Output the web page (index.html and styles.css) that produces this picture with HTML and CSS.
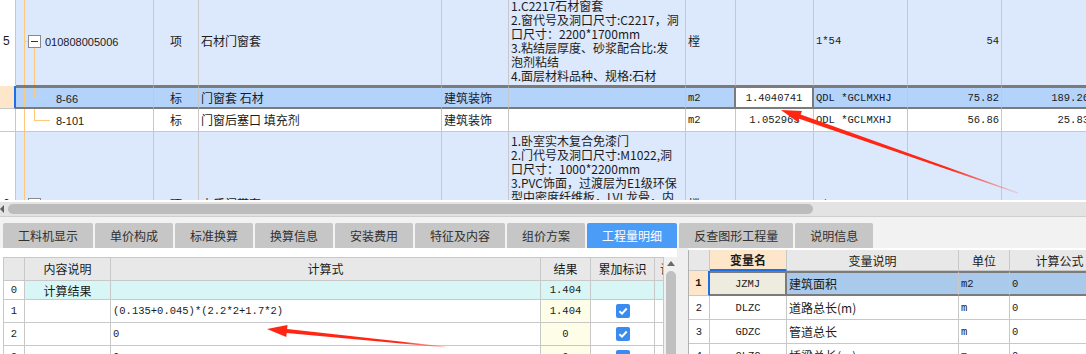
FILE: index.html
```html
<!DOCTYPE html>
<html lang="zh-CN">
<head>
  <meta charset="UTF-8">
  <title>工程量明细</title>
  <link rel="stylesheet" href="styles.css">
</head>
<body>

<div class="sheet">
  <table class="grid main">
    <colgroup>
      <col class="c-num"><col class="c-tree"><col class="c-type"><col class="c-name"><col class="c-spec">
      <col class="c-desc"><col class="c-unit"><col class="c-qty"><col class="c-expr"><col class="c-price"><col class="c-total">
    </colgroup>
    <tr class="r-item before-sel">
      <td class="num">5</td>
      <td class="tree tree-root"><span class="toggle"></span><span class="code">010808005006</span></td>
      <td class="center">项</td>
      <td>石材门窗套</td>
      <td></td>
      <td class="desc">1.C2217石材窗套<br>2.窗代号及洞口尺寸:C2217，洞<br>口尺寸：2200*1700mm<br>3.粘结层厚度、砂浆配合比:发<br>泡剂粘结<br>4.面层材料品种、规格:石材</td>
      <td>樘</td>
      <td></td>
      <td class="mono">1*54</td>
      <td class="mono right">54</td>
      <td></td>
    </tr>
    <tr class="r-sub sel">
      <td class="num"></td>
      <td class="tree tree-leaf"><span class="code">8-66</span></td>
      <td class="center">标</td>
      <td>门窗套 石材</td>
      <td>建筑装饰</td>
      <td></td>
      <td class="mono unit">m2</td>
      <td class="mono center qty">1.4040741</td>
      <td class="mono">QDL *GCLMXHJ</td>
      <td class="mono right">75.82</td>
      <td class="mono right">189.26</td>
    </tr>
    <tr class="r-sub plain">
      <td class="num"></td>
      <td class="tree tree-leaf"><span class="code">8-101</span></td>
      <td class="center">标</td>
      <td>门窗后塞口 填充剂</td>
      <td>建筑装饰</td>
      <td></td>
      <td class="mono">m2</td>
      <td class="mono center">1.052963</td>
      <td class="mono">QDL *GCLMXHJ</td>
      <td class="mono right">56.86</td>
      <td class="mono right">25.83</td>
    </tr>
    <tr class="r-item">
      <td class="num">6</td>
      <td class="tree tree-root2"><span class="toggle"></span><span class="code">010801002001</span></td>
      <td class="center">项</td>
      <td>木质门带套</td>
      <td></td>
      <td class="desc">1.卧室实木复合免漆门<br>2.门代号及洞口尺寸:M1022,洞<br>口尺寸：1000*2200mm<br>3.PVC饰面，过渡层为E1级环保<br>型中密度纤维板，LVL龙骨，内<br>部实木门芯<br>4.五金件：含门锁、合页<br>5.门套：木质门套<br>6.其他：满足设计及规范<br>要求</td>
      <td>樘</td>
      <td></td>
      <td class="mono">1*54</td>
      <td class="mono right">149</td>
      <td></td>
    </tr>
  </table>
</div>

<div class="hscroll"><span class="arrow"></span><div class="thumb"></div></div>

<div class="tabs">
  <div class="tab">工料机显示</div>
  <div class="tab">单价构成</div>
  <div class="tab">标准换算</div>
  <div class="tab">换算信息</div>
  <div class="tab">安装费用</div>
  <div class="tab">特征及内容</div>
  <div class="tab">组价方案</div>
  <div class="tab active">工程量明细</div>
  <div class="tab">反查图形工程量</div>
  <div class="tab">说明信息</div>
</div>

<div class="bottom">
  <div class="calc">
    <table class="grid calc-table">
      <colgroup>
        <col class="k-num"><col class="k-name"><col class="k-expr"><col class="k-res"><col class="k-flag"><col class="k-more">
      </colgroup>
      <tr class="head">
        <th></th><th>内容说明</th><th>计算式</th><th>结果</th><th>累加标识</th><th class="more">计</th>
      </tr>
      <tr class="total">
        <td class="num mono">0</td><td class="center">计算结果</td><td></td><td class="mono center">1.404</td><td></td><td></td>
      </tr>
      <tr>
        <td class="num mono">1</td><td></td><td class="mono">(0.135+0.045)*(2.2*2+1.7*2)</td><td class="mono center res">1.404</td>
        <td class="center"><svg class="chk" width="14" height="14" viewBox="0 0 14 14"><rect width="14" height="14" rx="2" fill="#3a8bf0"/><path d="M3.4 7.3 L6 9.7 L10.7 4.5" fill="none" stroke="#fff" stroke-width="2"/></svg></td><td></td>
      </tr>
      <tr>
        <td class="num mono">2</td><td></td><td class="mono">0</td><td class="mono center res">0</td>
        <td class="center"><svg class="chk" width="14" height="14" viewBox="0 0 14 14"><rect width="14" height="14" rx="2" fill="#3a8bf0"/><path d="M3.4 7.3 L6 9.7 L10.7 4.5" fill="none" stroke="#fff" stroke-width="2"/></svg></td><td></td>
      </tr>
      <tr>
        <td class="num mono">3</td><td></td><td class="mono">0</td><td class="mono center res">0</td>
        <td class="center"><svg class="chk" width="14" height="14" viewBox="0 0 14 14"><rect width="14" height="14" rx="2" fill="#3a8bf0"/><path d="M3.4 7.3 L6 9.7 L10.7 4.5" fill="none" stroke="#fff" stroke-width="2"/></svg></td><td></td>
      </tr>
    </table>
    <div class="vscroll"><span class="up"></span><div class="vthumb"></div></div>
  </div>

  <div class="vars">
    <table class="grid var-table">
      <colgroup>
        <col class="v-num"><col class="v-code"><col class="v-name"><col class="v-unit"><col class="v-formula">
      </colgroup>
      <tr class="head">
        <th></th><th class="hl">变量名</th><th>变量说明</th><th>单位</th><th>计算公式</th>
      </tr>
      <tr class="sel">
        <td class="num mono">1</td><td class="mono center cur">JZMJ</td><td>建筑面积</td><td class="mono">m2</td><td class="mono">0</td>
      </tr>
      <tr>
        <td class="num mono">2</td><td class="mono center">DLZC</td><td>道路总长(m)</td><td class="mono">m</td><td class="mono">0</td>
      </tr>
      <tr>
        <td class="num mono">3</td><td class="mono center">GDZC</td><td>管道总长</td><td class="mono">m</td><td class="mono">0</td>
      </tr>
      <tr>
        <td class="num mono">4</td><td class="mono center">QLZC</td><td>桥梁总长(m)</td><td class="mono">m</td><td class="mono">0</td>
      </tr>
    </table>
  </div>
</div>

<svg class="marks" width="1086" height="354" viewBox="0 0 1086 354">
  <defs>
    <linearGradient id="fade1" gradientUnits="userSpaceOnUse" x1="781" y1="110" x2="1018" y2="193">
      <stop offset="0" stop-color="#ff2614"/>
      <stop offset="0.7" stop-color="#ff2614"/>
      <stop offset="1" stop-color="#ff2614" stop-opacity="0.15"/>
    </linearGradient>
    <linearGradient id="fade2" gradientUnits="userSpaceOnUse" x1="267" y1="329" x2="445" y2="347">
      <stop offset="0" stop-color="#ff2614"/>
      <stop offset="0.75" stop-color="#ff2614"/>
      <stop offset="1" stop-color="#ff2614" stop-opacity="0.2"/>
    </linearGradient>
  </defs>
  <polygon fill="url(#fade1)" points="781,110 802,110.9 800.6,114.5 1018.2,192.5 1017.8,193.5 799.2,118.7 797.9,122.3"/>
  <polygon fill="url(#fade2)" points="267,329 287.5,325 287.1,329 445.05,346.5 444.95,347.5 286.7,333 286.3,337"/>
</svg>

</body>
</html>
```

FILE: styles.css
```css
body {
  margin: 0;
  width: 1086px;
  height: 354px;
  overflow: hidden;
  position: relative;
  font-family: "Noto Sans CJK SC", "Liberation Sans", sans-serif;
  font-size: 12px;
  color: #1b1b1b;
  background: #fff;
}

/* shared grid look */
.grid {
  border-collapse: separate;
  border-spacing: 0;
  table-layout: fixed;
}

.grid td, .grid th {
  padding: 0 2px;
  border-right: 1px solid #c8c8c8;
  border-bottom: 1px solid #c8c8c8;
  white-space: nowrap;
  overflow: hidden;
  font-weight: normal;
  text-align: left;
}

.mono {
  font-family: "Liberation Mono", monospace;
  font-size: 10.5px;
}

.center { text-align: center !important; }
.right { text-align: right !important; }

/* top sheet */
.sheet {
  height: 200px;
  overflow: hidden;
}

.main {
  width: 1092px;
  margin-top: -3px;
}

.c-num { width: 16px; }
.c-tree { width: 138px; }
.c-type { width: 45px; }
.c-name { width: 243px; }
.c-spec { width: 67px; }
.c-desc { width: 177px; }
.c-unit { width: 50px; }
.c-qty { width: 78px; }
.c-expr { width: 94px; }
.c-price { width: 94px; }
.c-total { width: 90px; }

.main td {
  background-color: #dce8fb;
  line-height: 14px;
}

.main tr.r-item { height: 88px; }
.main tr.r-sub { height: 23px; }
.main tr.before-sel td { border-bottom-color: #7b7b7b; }
.main tr.before-sel td.num { border-bottom-color: transparent; }
.main tr.plain td { background-color: #fff; }

.main td.num {
  background-color: #fff;
  padding-left: 3px;
  font-family: "Liberation Sans", sans-serif;
}

.main .desc { padding: 2px; }

.main tr.sel td {
  background-color: #b4d3fb;
  border-top: 2px solid #7b7b7b;
  border-bottom: 2px solid #7b7b7b;
}

.main tr.sel td.num {
  background-color: #fde6c9;
  border-top: 0;
  border-bottom: 1px solid #c8c8c8;
  border-right: 2px solid #1e6fe6;
}

.main tr.sel td.unit { border-right: 2px solid #7b7b7b; }
.main tr.sel td.qty {
  background-color: #fff;
  border-right: 2px solid #7b7b7b;
}

/* tree lines */
.tree {
  background-repeat: no-repeat;
}

.tree .code {
  font-family: "Liberation Sans", sans-serif;
  font-size: 11px;
  vertical-align: middle;
}

.tree-root {
  padding-left: 12px !important;
  background-image:
    linear-gradient(#ffc97c, #ffc97c),
    linear-gradient(#ffc97c, #ffc97c),
    linear-gradient(#ffc97c, #ffc97c);
  background-size: 1px 100%, 5px 1px, 1px 37px;
  background-position: 8px 0, 8px 50%, 18px 100%;
}

.tree-root2 {
  padding-left: 12px !important;
  background-image:
    linear-gradient(#ffc97c, #ffc97c),
    linear-gradient(#ffc97c, #ffc97c);
  background-size: 1px 100%, 5px 1px;
  background-position: 8px 0, 8px 50%;
}

.tree-leaf {
  padding-left: 40px !important;
  background-image:
    linear-gradient(#ffc97c, #ffc97c),
    linear-gradient(#ffc97c, #ffc97c),
    linear-gradient(#ffc97c, #ffc97c);
  background-size: 1px 100%, 1px 50%, 16px 1px;
  background-position: 8px 0, 18px 0, 18px 50%;
}

.toggle {
  display: inline-block;
  width: 11px;
  height: 11px;
  margin-right: 4px;
  border: 1px solid #8a8a8a;
  background: #fff linear-gradient(#333, #333) center / 7px 1px no-repeat;
  vertical-align: middle;
}

/* horizontal scroll bar */
.hscroll {
  display: flex;
  align-items: center;
  height: 14px;
  border-top: 2px solid #fff;
  background: #e3e3e3;
}

.hscroll .arrow {
  width: 0;
  height: 0;
  border-top: 4px solid transparent;
  border-bottom: 4px solid transparent;
  border-right: 4px solid #5e5e5e;
  margin-right: 4px;
}

.hscroll .thumb {
  width: 805px;
  height: 10px;
  border-radius: 5px;
  background: #bcbcbc;
}

/* tabs */
.tabs {
  display: flex;
  align-items: flex-end;
  gap: 2px;
  height: 31px;
  padding-left: 3px;
  background: #f2f2f2;
  border-top: 1px solid #cfcfcf;
}

.tab {
  padding: 0 15px;
  height: 25px;
  line-height: 25px;
  background: #c6c6c6;
  color: #303030;
  border-radius: 2px 2px 0 0;
}

.tab.active {
  background: #4a9cf6;
  color: #fff;
}

/* lower panels */
.bottom {
  display: flex;
  height: 106px;
  background: #efefef;
}

.calc {
  display: flex;
  align-items: flex-start;
  box-sizing: border-box;
  width: 677px;
  height: 106px;
  padding: 9px 0 0 3px;
  background: #fff;
}

.calc-table {
  width: 660px;
  border-top: 1px solid #c8c8c8;
  border-left: 1px solid #c8c8c8;
}

.k-num { width: 21px; }
.k-name { width: 86px; }
.k-expr { width: 430px; }
.k-res { width: 50px; }
.k-flag { width: 64px; }
.k-more { width: 9px; }

.calc-table tr { height: 23px; }
.calc-table tr.head th {
  background: #e8e8e8;
  text-align: center;
  line-height: 22px;
}
.calc-table tr.head th.more {
  padding-left: 5px;
  text-align: left;
}
.calc-table tr.total { height: 19px; }
.calc-table tr.total td { background: #d9f6f6; }
.calc-table tr.total td.num { background: #fff; }
.calc-table td.num { text-align: center; }
.calc-table td.res { background: #fefde8; }

.chk {
  display: block;
  margin: 0 auto;
}

.vscroll {
  display: flex;
  flex-direction: column;
  align-items: center;
  align-self: stretch;
  width: 14px;
  background: #f0f0f0;
}

.vscroll .up {
  width: 0;
  height: 0;
  border-left: 4px solid transparent;
  border-right: 4px solid transparent;
  border-bottom: 5px solid #6a6a6a;
  margin: 4px 0 5px;
}

.vscroll .vthumb {
  flex: 1;
  width: 10px;
  border-radius: 5px 5px 0 0;
  background: #c0c0c0;
}

.vars {
  flex: 1;
  margin-left: 11px;
  padding-top: 2px;
  overflow: hidden;
  background: #fff;
}

.var-table {
  width: 421px;
  border-left: 1px solid #b0b0b0;
}

.v-num { width: 21px; }
.v-code { width: 77px; }
.v-name { width: 172px; }
.v-unit { width: 51px; }
.v-formula { width: 100px; }

.var-table tr { height: 24px; }
.var-table tr.head { height: 21px; }
.var-table tr.head th {
  background: #e8e8e8;
  text-align: center;
}
.var-table tr.head th.hl {
  background: #fde6c9;
  font-weight: bold;
  border-bottom: 2px solid #1e6fe6;
}
.var-table td.num { text-align: center; }

.var-table tr.sel { height: 25px; }
.var-table tr.sel td {
  background: #a9caea;
  border-top: 2px solid #7b7b7b;
  border-bottom: 2px solid #7b7b7b;
}
.var-table tr.sel td.num {
  background: #fde6c9;
  font-weight: bold;
  border-top: 0;
  border-bottom: 1px solid #c8c8c8;
  border-right: 2px solid #1e6fe6;
}
.var-table tr.sel td.cur {
  background: #eeebdf;
  border-right: 2px solid #7b7b7b;
}

/* annotation arrows drawn over the screenshot */
.marks {
  position: absolute;
  top: 0;
  left: 0;
  pointer-events: none;
}
```
